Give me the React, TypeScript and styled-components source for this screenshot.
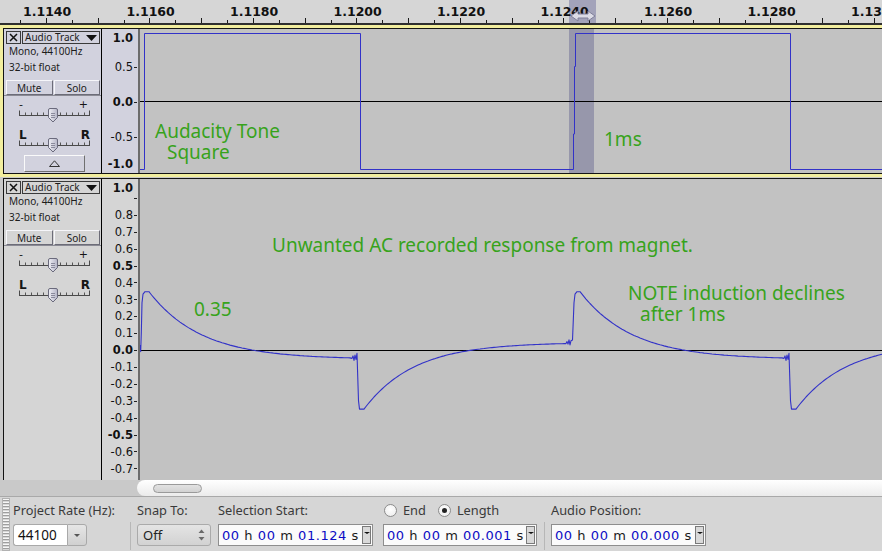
import React from "react";
import styled, { createGlobalStyle } from "styled-components";

const GlobalStyle = createGlobalStyle`
  html, body { margin: 0; padding: 0; background: #d6d6d6; overflow: hidden; }
  * { box-sizing: border-box; }
`;

const X0 = 20;
const LABEL_STEP = 103.5;
const TICK_STEP = 25.875;

const Window = styled.div`
  width: 882px;
  height: 551px;
  overflow: hidden;
  display: flex;
  flex-direction: column;
  font-family: "Noto Sans", "DejaVu Sans", sans-serif;
  background: #d6d6d6;
`;

/* ---------------- time ruler ---------------- */
const RulerBar = styled.div`
  flex: none;
  height: 25px;
  background: #d6d6d6;
  border-bottom: 2px solid #2f2f2f;
`;
const RulerSvg = styled.svg`
  display: block;
`;

function TimeRuler() {
  const ticks = [];
  for (let k = 0; k < 35; k++) {
    const x = Math.round(X0 + TICK_STEP * k) + 0.5;
    const tall = k % 2 === 1;
    ticks.push(<line key={k} x1={x} x2={x} y1={tall ? 18 : 20} y2={23} stroke="#1a1a1a" />);
  }
  const labels = [];
  for (let i = 0; i < 9; i++) {
    const t = (1.114 + 0.002 * i).toFixed(4);
    labels.push(
      <text key={i} x={X0 + LABEL_STEP * i + 3} y={15.5} fontFamily="DejaVu Sans, sans-serif" fontWeight="bold" fontSize="12.5" fill="#111">
        {t}
      </text>
    );
  }
  return (
    <RulerBar>
      <RulerSvg width={882} height={23} viewBox="0 0 882 23">
        <rect x={569} y={0} width={27} height={23} fill="#a3a3ba" />
        {labels}
        {ticks}
        <polygon
          points="571,16 578,11 578,14 588,14 588,11 595,16 588,21 588,18 578,18 578,21"
          fill="#dcdce6"
          stroke="#80809a"
          strokeWidth="1"
        />
      </RulerSvg>
    </RulerBar>
  );
}

/* ---------------- tracks ---------------- */
const TrackArea = styled.div`
  flex: none;
  height: 455px;
  overflow: hidden;
  background: #cacaca;
`;
const TrackFrame = styled.div<{ $focused?: boolean; $height: number }>`
  width: 900px;
  height: ${(p) => p.$height}px;
  padding: ${(p) => (p.$focused ? "3px 0 3px 3px" : "1px 0 3px 3px")};
  background: ${(p) => (p.$focused ? "#f2ee9e" : "transparent")};
`;
const TrackInner = styled.div`
  height: 100%;
  display: flex;
  border: 1px solid #141414;
  border-right: none;
`;
const ControlPanel = styled.div<{ $focused?: boolean }>`
  flex: none;
  width: 98px;
  border-right: 1px solid #000;
  background: ${(p) => (p.$focused ? "#d2d2de" : "#d5d5d5")};
  display: flex;
  flex-direction: column;
  color: #1c1c1c;
  font-family: "Noto Sans", sans-serif;
`;
const HeaderRow = styled.div`
  display: flex;
  height: 13px;
  margin: 2px 1px 0 2px;
  gap: 1px;
`;
const CloseBox = styled.div`
  width: 15px;
  border: 1px solid #3a3a3a;
  display: flex;
  align-items: center;
  justify-content: center;
`;
const NameButton = styled.div`
  flex: 1;
  border: 1px solid #3a3a3a;
  display: flex;
  align-items: center;
  justify-content: space-between;
  padding: 0 2px 0 2px;
  font-size: 10px;
  line-height: 11px;
  white-space: nowrap;
`;
const InfoLine = styled.div`
  height: 16px;
  line-height: 14px;
  padding-left: 5px;
  font-size: 10px;
  white-space: nowrap;
`;
const ButtonRow = styled.div`
  display: flex;
  gap: 1px;
  margin: 4px 1px 0 2px;
  height: 15px;
`;
const PanelButton = styled.div`
  flex: 1;
  border: 1px solid;
  border-color: #f6f6fa #6c6c78 #6c6c78 #f6f6fa;
  font-size: 10px;
  display: flex;
  align-items: center;
  justify-content: center;
`;
const Divider = styled.div`
  height: 1px;
  background: #8a8a94;
`;
const SliderBlock = styled.div<{ $gap: number }>`
  margin: ${(p) => p.$gap}px 0 0 15px;
  width: 71px;
`;
const SliderLabels = styled.div<{ $bold?: boolean }>`
  height: 10px;
  line-height: 14px;
  display: flex;
  justify-content: space-between;
  padding: 0 ${(p) => (p.$bold ? 0 : 2)}px 0 0;
  font-family: "DejaVu Sans", sans-serif;
  font-size: ${(p) => (p.$bold ? 12 : 11)}px;
  font-weight: ${(p) => (p.$bold ? "bold" : "normal")};
  color: #151515;
`;
const SliderSvg = styled.svg`
  display: block;
  overflow: visible;
`;
const CollapseButton = styled.div`
  margin: auto 0 1px 20px;
  width: 61px;
  height: 17px;
  border: 1px solid;
  border-color: #fafafa #707070 #707070 #fafafa;
  display: flex;
  align-items: center;
  justify-content: center;
`;

function Slider() {
  const ticks = [];
  for (let i = 1; i < 12; i++) {
    const x = Math.round(i * 5.9) + 0.5;
    ticks.push(<line key={i} x1={x} x2={x} y1={4.5} y2={7} stroke="#555" />);
  }
  return (
    <SliderSvg width={71} height={16} viewBox="0 0 71 16">
      <line x1={0} x2={71} y1={7.5} y2={7.5} stroke="#4a4a4a" />
      <line x1={0.5} x2={0.5} y1={2.5} y2={7.5} stroke="#4a4a4a" />
      <line x1={70.5} x2={70.5} y1={2.5} y2={7.5} stroke="#4a4a4a" />
      {ticks}
      <defs>
        <linearGradient id="thumbg" x1="0" y1="0" x2="1" y2="0">
          <stop offset="0" stopColor="#f0f0f6" />
          <stop offset="1" stopColor="#b4b4c6" />
        </linearGradient>
      </defs>
      <path d="M29.5 2 Q29.5 0.5 31 0.5 H37 Q38.5 0.5 38.5 2 V9.5 L34 14 L29.5 9.5 Z" fill="url(#thumbg)" stroke="#6a6a7c" />
      <line x1={32} x2={36} y1={5.5} y2={5.5} stroke="#8a8a9c" />
      <line x1={32} x2={36} y1={7.5} y2={7.5} stroke="#8a8a9c" />
      <line x1={32} x2={36} y1={9.5} y2={9.5} stroke="#8a8a9c" />
    </SliderSvg>
  );
}

function TrackControls({ focused, collapse }: { focused?: boolean; collapse?: boolean }) {
  return (
    <ControlPanel $focused={focused}>
      <HeaderRow>
        <CloseBox>
          <svg width="9" height="9" viewBox="0 0 9 9">
            <path d="M1 1 L8 8 M8 1 L1 8" stroke="#111" strokeWidth="1.5" />
          </svg>
        </CloseBox>
        <NameButton>
          <span>Audio Track</span>
          <svg width="11" height="6" viewBox="0 0 11 6">
            <polygon points="0,0 11,0 5.5,6" fill="#111" />
          </svg>
        </NameButton>
      </HeaderRow>
      <InfoLine>Mono, 44100Hz</InfoLine>
      <InfoLine>32-bit float</InfoLine>
      <ButtonRow>
        <PanelButton>Mute</PanelButton>
        <PanelButton>Solo</PanelButton>
      </ButtonRow>
      <Divider />
      <SliderBlock $gap={2}>
        <SliderLabels>
          <span>-</span>
          <span>+</span>
        </SliderLabels>
        <Slider />
      </SliderBlock>
      <SliderBlock $gap={4}>
        <SliderLabels $bold>
          <span>L</span>
          <span>R</span>
        </SliderLabels>
        <Slider />
      </SliderBlock>
      {collapse && (
        <CollapseButton>
          <svg width="11" height="7" viewBox="0 0 11 7">
            <polygon points="0.5,6.5 10.5,6.5 5.5,0.8" fill="none" stroke="#333" />
          </svg>
        </CollapseButton>
      )}
    </ControlPanel>
  );
}

const VRuler = styled.div<{ $focused?: boolean }>`
  flex: none;
  width: 38px;
  border-right: 2px solid #6c6c6c;
  background: ${(p) => (p.$focused ? "#d2d2de" : "#d5d5d5")};
  overflow: hidden;
`;
const PlotSvg = styled.svg`
  display: block;
`;

type RulerLabel = { y: number; text: string; bold?: boolean; tick?: boolean };

function VerticalRuler({ top, height, labels, focused }: { top: number; height: number; labels: RulerLabel[]; focused?: boolean }) {
  return (
    <VRuler $focused={focused}>
      <PlotSvg width={36} height={height} viewBox={`102 ${top} 36 ${height}`}>
        {labels.map((l, i) => (
          <g key={i}>
            {l.text && (
              <text
                x={133}
                y={l.y + 4.2}
                textAnchor="end"
                fontFamily="DejaVu Sans, sans-serif"
                fontSize="11.5"
                fontWeight={l.bold ? "bold" : "normal"}
                fill="#111"
              >
                {l.text}
              </text>
            )}
            {l.tick !== false && <line x1={134} x2={137} y1={Math.round(l.y) + 0.5} y2={Math.round(l.y) + 0.5} stroke="#222" />}
          </g>
        ))}
      </PlotSvg>
    </VRuler>
  );
}

const WaveView = styled.div`
  flex: 1;
  position: relative;
  background: #c2c2c2;
  overflow: hidden;
`;
const Note = styled.div<{ $x: number; $y: number }>`
  position: absolute;
  left: ${(p) => p.$x}px;
  top: ${(p) => p.$y}px;
  color: #37a31b;
  font-family: "Noto Sans", sans-serif;
  font-size: 19px;
  line-height: 21px;
  white-space: nowrap;
`;

/* ---- waveform data ---- */
const y1 = (v: number) => 101.5 - 68 * v;
const y2 = (v: number) => 350 - 169 * v;

function squarePath() {
  return [
    `M140 ${y1(-1)}`,
    `H144.5 V${y1(1)}`,
    `H360.5 V${y1(-1)}`,
    `H573.5 V134 H574.5 V66.5 H575.5 V${y1(1)}`,
    `H790.5 V${y1(-1)}`,
    `H900`,
  ].join(" ");
}

function responsePath() {
  const pts: [number, number][] = [];
  const push = (x: number, v: number) => pts.push([x, y2(v)]);
  const decay = (from: number, to: number, x0: number) => {
    for (let x = from; x <= to; x += 2) push(x, -0.055 + 0.4 * Math.exp(-(x - x0) / 52));
  };
  const recover = (from: number, to: number, x0: number) => {
    for (let x = from; x <= to; x += 2) push(x, 0.045 - 0.395 * Math.exp(-(x - x0) / 50));
  };
  push(140, 0.03);
  push(140.7, -0.01);
  push(141.3, 0.1);
  push(142, 0.28);
  push(143, 0.33);
  push(145, 0.345);
  push(149, 0.345);
  decay(150, 350, 149);
  push(352, -0.05);
  push(353, -0.035);
  push(354, -0.062);
  push(355, -0.03);
  push(356, -0.056);
  push(357, -0.02);
  push(358.5, -0.3);
  push(359.5, -0.35);
  push(364, -0.35);
  recover(366, 566, 364);
  push(567, 0.05);
  push(568, 0.035);
  push(569, 0.06);
  push(570, 0.03);
  push(571, 0.055);
  push(572.5, 0.06);
  push(574, 0.28);
  push(575, 0.33);
  push(577, 0.345);
  push(580, 0.345);
  decay(582, 782, 580);
  push(784, -0.05);
  push(785, -0.035);
  push(786, -0.062);
  push(787, -0.03);
  push(788, -0.056);
  push(789, -0.02);
  push(790.5, -0.3);
  push(791.5, -0.35);
  push(796, -0.35);
  recover(798, 900, 796);
  return "M" + pts.map(([x, y]) => `${x.toFixed(1)} ${y.toFixed(1)}`).join(" L");
}

const track1Labels: RulerLabel[] = [
  { y: 37.7, text: "1.0", bold: true, tick: false },
  { y: 66.7, text: "0.5" },
  { y: 101.7, text: "0.0", bold: true },
  { y: 137.2, text: "-0.5" },
  { y: 163.3, text: "-1.0", bold: true, tick: false },
];

const track2Labels: RulerLabel[] = (() => {
  const out: RulerLabel[] = [{ y: 187.7, text: "1.0", bold: true, tick: false }, { y: 198, text: "" }];
  for (let i = 8; i >= -7; i--) {
    const v = i / 10;
    out.push({ y: 350 - 169 * v, text: v.toFixed(1), bold: i % 5 === 0 });
  }
  return out;
})();

function Track1() {
  return (
    <TrackFrame $focused $height={152}>
      <TrackInner>
        <TrackControls focused collapse />
        <VerticalRuler top={29} height={144} labels={track1Labels} focused />
        <WaveView>
          <PlotSvg width={760} height={144} viewBox="140 29 760 144">
            <rect x={569} y={29} width={25} height={144} fill="#9797ab" />
            <line x1={140} x2={900} y1={101.5} y2={101.5} stroke="#000" />
            <path d={squarePath()} fill="none" stroke="#3232c8" strokeWidth="1" />
          </PlotSvg>
          <Note $x={15} $y={92}>Audacity Tone</Note>
          <Note $x={27} $y={113}>Square</Note>
          <Note $x={464} $y={100}>1ms</Note>
        </WaveView>
      </TrackInner>
    </TrackFrame>
  );
}

function Track2() {
  return (
    <TrackFrame $height={360}>
      <TrackInner>
        <TrackControls collapse />
        <VerticalRuler top={179} height={354} labels={track2Labels} />
        <WaveView>
          <PlotSvg width={760} height={354} viewBox="140 179 760 354">
            <line x1={140} x2={900} y1={350.5} y2={350.5} stroke="#000" />
            <path d={responsePath()} fill="none" stroke="#3232c8" strokeWidth="1.1" strokeLinejoin="round" />
          </PlotSvg>
          <Note $x={132} $y={56}>Unwanted AC recorded response from magnet.</Note>
          <Note $x={54} $y={120}>0.35</Note>
          <Note $x={488} $y={104}>NOTE induction declines</Note>
          <Note $x={500} $y={125}>after 1ms</Note>
        </WaveView>
      </TrackInner>
    </TrackFrame>
  );
}

/* ---------------- scrollbar ---------------- */
const ScrollRow = styled.div`
  flex: none;
  height: 16px;
  display: flex;
  background: #c9c9c9;
`;
const ScrollTrough = styled.div`
  margin-left: 137px;
  flex: 1;
  background: linear-gradient(#ffffff, #ebebeb);
  border-radius: 8px 0 0 8px;
  display: flex;
  align-items: center;
  padding-left: 16px;
`;
const ScrollThumb = styled.div`
  width: 49px;
  height: 9px;
  border: 1px solid #9a9a9a;
  border-radius: 5px;
  background: linear-gradient(#e2e2e2, #d2d2d2);
`;

/* ---------------- toolbar ---------------- */
const Toolbar = styled.div`
  flex: none;
  height: 55px;
  border-top: 1px solid #a9a9a9;
  background: #d6d6d6;
  display: flex;
  align-items: stretch;
  color: #3a3a3a;
`;
const Grip = styled.div`
  flex: none;
  width: 8px;
  margin: 1px 3px 0 2px;
  border: 1px solid #b2b2b2;
  background: repeating-linear-gradient(to bottom, #f6f6f6 0 1px, #9e9e9e 1px 2px, #d6d6d6 2px 3px);
`;
const Group = styled.div<{ $w: number }>`
  flex: none;
  width: ${(p) => p.$w}px;
  display: flex;
  flex-direction: column;
`;
const GroupLabel = styled.div`
  height: 20px;
  margin-top: 3px;
  font-size: 12.8px;
  white-space: nowrap;
  display: flex;
  align-items: center;
`;
const ControlRow = styled.div`
  margin-top: 4px;
  height: 22px;
  display: flex;
`;
const VSep = styled.div`
  flex: none;
  width: 1px;
  margin: 25px 6px 1px 0;
  background: #b7b7b7;
`;
const RateInput = styled.div`
  width: 54px;
  border: 1px solid #a9a9a9;
  border-right: none;
  border-radius: 3px 0 0 3px;
  background: #fff;
  font-size: 13.5px;
  padding-left: 4px;
  color: #111;
  display: flex;
  align-items: center;
`;
const DropButton = styled.div`
  width: 20px;
  border: 1px solid #a9a9a9;
  border-radius: 0 3px 3px 0;
  background: linear-gradient(#e6e6e6, #d0d0d0);
  display: flex;
  align-items: center;
  justify-content: center;
`;
const DownTri = styled.span<{ $size: number; $color: string }>`
  width: 0;
  height: 0;
  border-left: ${(p) => p.$size}px solid transparent;
  border-right: ${(p) => p.$size}px solid transparent;
  border-top: ${(p) => p.$size - 0.5}px solid ${(p) => p.$color};
`;
const SnapCombo = styled.div`
  width: 74px;
  border: 1px solid #aaaaaa;
  border-radius: 3px;
  background: linear-gradient(#e4e4e4, #d2d2d2);
  padding: 0 5px;
  display: flex;
  align-items: center;
  justify-content: space-between;
  font-size: 13px;
  color: #222;
`;
const TimeBox = styled.div<{ $w: number }>`
  width: ${(p) => p.$w}px;
  border: 1px solid #8e8e8e;
  background: #fbfbfb;
  padding-left: 3px;
  display: flex;
  align-items: center;
`;
const TimeText = styled.span`
  font-family: "DejaVu Sans", sans-serif;
  font-size: 13px;
  letter-spacing: 0.55px;
  white-space: pre;
  color: #1a1a1a;
`;
const Dig = styled.span`
  color: #0c0cc4;
`;
const TimeDrop = styled.div`
  margin: 0 1px 0 auto;
  width: 9px;
  height: 18px;
  border: 1px solid #7a7a7a;
  background: #d9d9d9;
  display: flex;
  justify-content: center;
  padding-top: 5px;
`;
const RadioLabel = styled.span<{ $gap: number }>`
  margin-left: ${(p) => p.$gap}px;
`;
const Radio = styled.span<{ $checked?: boolean; $gap: number }>`
  flex: none;
  margin-left: ${(p) => p.$gap}px;
  width: 13px;
  height: 13px;
  border-radius: 50%;
  border: 1px solid #8c8c8c;
  background: radial-gradient(circle at 50% 40%, #ffffff, #ebebeb);
  display: inline-flex;
  align-items: center;
  justify-content: center;
  &::after {
    content: "";
    width: 5px;
    height: 5px;
    border-radius: 50%;
    background: ${(p) => (p.$checked ? "#222" : "transparent")};
  }
`;

function Time({ h, m, s, w }: { h: string; m: string; s: string; w: number }) {
  return (
    <TimeBox $w={w}>
      <TimeText>
        <Dig>{h}</Dig> h <Dig>{m}</Dig> m <Dig>{s}</Dig> s
      </TimeText>
      <TimeDrop>
        <DownTri $size={3} $color="#111" />
      </TimeDrop>
    </TimeBox>
  );
}

function SelectionToolbar() {
  return (
    <Toolbar>
      <Grip />
      <Group $w={117}>
        <GroupLabel>Project Rate (Hz):</GroupLabel>
        <ControlRow>
          <RateInput>44100</RateInput>
          <DropButton>
            <DownTri $size={3.5} $color="#555" />
          </DropButton>
        </ControlRow>
      </Group>
      <VSep />
      <Group $w={81}>
        <GroupLabel>Snap To:</GroupLabel>
        <ControlRow>
          <SnapCombo>
            <span>Off</span>
            <svg width="7" height="14" viewBox="0 0 7 14">
              <polygon points="0.5,5 3.5,1.5 6.5,5" fill="#6a6a6a" />
              <polygon points="0.5,9 3.5,12.5 6.5,9" fill="#6a6a6a" />
            </svg>
          </SnapCombo>
        </ControlRow>
      </Group>
      <Group $w={165}>
        <GroupLabel>Selection Start:</GroupLabel>
        <ControlRow>
          <Time h="00" m="00" s="01.124" w={155} />
        </ControlRow>
      </Group>
      <Group $w={161}>
        <GroupLabel>
          <Radio $gap={1} />
          <RadioLabel $gap={6}>End</RadioLabel>
          <Radio $gap={12} $checked />
          <RadioLabel $gap={6}>Length</RadioLabel>
        </GroupLabel>
        <ControlRow>
          <Time h="00" m="00" s="00.001" w={154} />
        </ControlRow>
      </Group>
      <VSep />
      <Group $w={200}>
        <GroupLabel>Audio Position:</GroupLabel>
        <ControlRow>
          <Time h="00" m="00" s="00.000" w={155} />
        </ControlRow>
      </Group>
    </Toolbar>
  );
}

export default function App() {
  return (
    <>
      <GlobalStyle />
      <Window>
        <TimeRuler />
        <TrackArea>
          <Track1 />
          <Track2 />
        </TrackArea>
        <ScrollRow>
          <ScrollTrough>
            <ScrollThumb />
          </ScrollTrough>
        </ScrollRow>
        <SelectionToolbar />
      </Window>
    </>
  );
}
